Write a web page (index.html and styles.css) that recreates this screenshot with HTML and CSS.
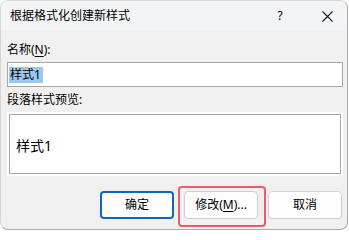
FILE: index.html
```html
<!DOCTYPE html>
<html lang="zh-CN">
<head>
<meta charset="utf-8">
<title>根据格式化创建新样式</title>
<link rel="stylesheet" href="styles.css">
</head>
<body>
<div class="window">
  <div class="titlebar">
    <span class="title">根据格式化创建新样式</span>
    <span class="help">?</span>
    <span class="close">
      <svg width="11" height="11" viewBox="0 0 11 11"><path d="M0.5 0.5 L10.5 10.5 M10.5 0.5 L0.5 10.5" stroke="#1a1a1a" stroke-width="1.1" fill="none"/></svg>
    </span>
  </div>
  <div class="content">
    <div class="label label-name">名称(<u>N</u>):</div>
    <div class="input"><span class="selected">样式1</span></div>
    <div class="label label-preview">段落样式预览:</div>
    <div class="preview"><div class="preview-inner">样式1</div></div>
    <div class="buttons">
      <div class="btn btn-default">确定</div>
      <div class="btn btn-modify">修改(<u>M</u>)...<span class="highlight"></span></div>
      <div class="btn">取消</div>
    </div>
  </div>
</div>
</body>
</html>
```

FILE: styles.css
```css
html, body {
  margin: 0;
  padding: 0;
  background: #ffffff;
}
body {
  font-family: "Noto Sans", "Noto Sans CJK SC", sans-serif;
  font-size: 12px;
  color: #000;
}
.window {
  box-sizing: border-box;
  width: 348px;
  height: 230px;
  border: 1px solid #a9a9a9;
  border-left-color: #d4d4d4;
  border-top-color: #d8d8d8;
  border-radius: 8px;
  background: #f0f0f0;
  overflow: hidden;
  display: flex;
  flex-direction: column;
}
.titlebar {
  height: 30px;
  flex: none;
  background: #f2f4f6;
  display: flex;
  align-items: center;
  padding-left: 9px;
}
.title {
  font-size: 12px;
  line-height: 16px;
  flex: 1;
}
.help {
  width: 12px;
  text-align: center;
  font-size: 12px;
  line-height: 16px;
  margin-right: 36px;
}
.close {
  width: 11px;
  height: 11px;
  display: flex;
  margin-right: 14px;
}
.content {
  padding: 0 5px 0 6px;
  display: flex;
  flex-direction: column;
}
.label {
  line-height: 16px;
  height: 16px;
}
.label u {
  text-decoration-thickness: 1px;
  text-underline-offset: 2px;
}
.label-name {
  margin-top: 11px;
}
.input {
  box-sizing: border-box;
  margin-top: 4px;
  width: 336px;
  height: 25px;
  background: #fff;
  border: 1px solid #a7a7a7;
  display: flex;
  align-items: center;
  padding-left: 1px;
}
.selected {
  background: #99c9ef;
  line-height: 16px;
  padding: 0 2px 0 1px;
}
.label-preview {
  margin-top: 5px;
}
.preview {
  box-sizing: border-box;
  margin-top: 4px;
  width: 336px;
  height: 64px;
  background: #fff;
  padding: 2px;
}
.preview-inner {
  box-sizing: border-box;
  height: 100%;
  border: 1px solid #a7a7a7;
  display: flex;
  align-items: center;
  padding-left: 6px;
  padding-top: 2px;
  font-size: 14px;
}
.buttons {
  margin-top: 15px;
  width: 335px;
  display: flex;
  justify-content: flex-end;
  gap: 10px;
}
.btn {
  position: relative;
  box-sizing: border-box;
  width: 74px;
  height: 28px;
  border: 1px solid #d0d0d0;
  border-radius: 4px;
  background: #fdfdfd;
  display: flex;
  align-items: center;
  justify-content: center;
  line-height: 16px;
}
.btn u {
  text-decoration-thickness: 1px;
  text-underline-offset: 2px;
}
.btn-default {
  border: 2px solid #0a67c4;
}
.highlight {
  position: absolute;
  left: -7px;
  top: -6px;
  width: 88px;
  height: 41px;
  box-sizing: border-box;
  border: 2px solid #ee5a6c;
  border-radius: 4px;
}
```
